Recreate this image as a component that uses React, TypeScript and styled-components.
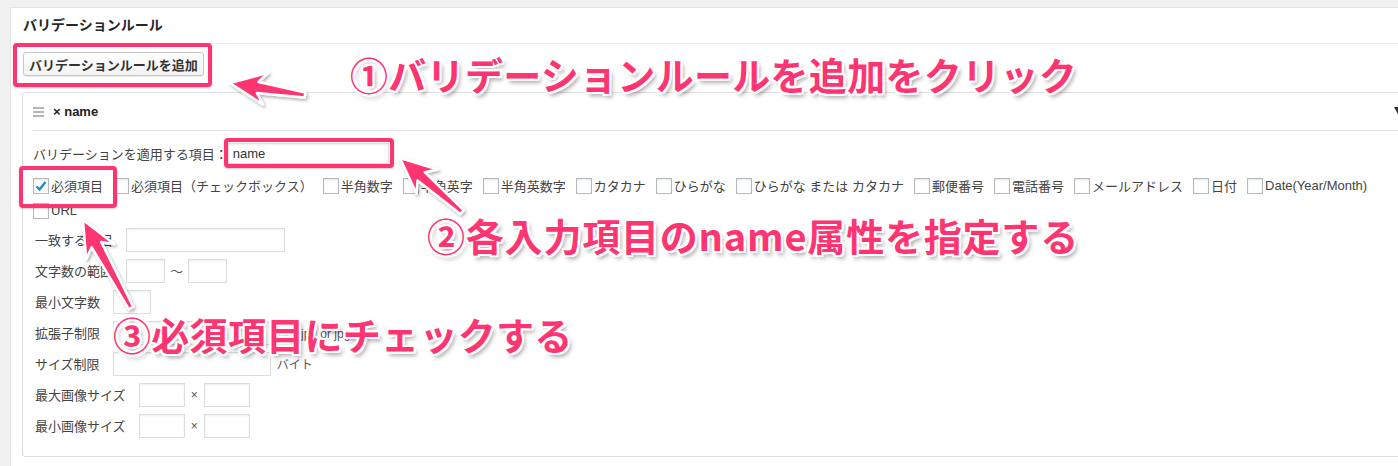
import React from "react";
import styled, { createGlobalStyle } from "styled-components";

const PINK = "#ff3571";

const GlobalStyle = createGlobalStyle`
  html, body {
    margin: 0;
    padding: 0;
  }
  body {
    background: #f1f1f1;
    overflow: hidden;
    font-family: "Liberation Sans", "Noto Sans CJK JP", sans-serif;
    font-size: 13px;
    color: #444;
  }
`;

type Pt = [number, number];

// tip / tail in page coordinates, returns polygon points of a tapered arrow
const arrowPoints = (tip: Pt, tail: Pt, head = 36, wing = 16) => {
  const dx = tip[0] - tail[0];
  const dy = tip[1] - tail[1];
  const len = Math.hypot(dx, dy);
  const ux = dx / len;
  const uy = dy / len;
  const nx = -uy;
  const ny = ux;
  const local: Pt[] = [
    [0, 0],
    [-head, -wing],
    [-head + 8, -5.5],
    [-len, -2.5],
    [-len, 2.5],
    [-head + 8, 5.5],
    [-head, wing]
  ];
  return local
    .map(([a, b]) => `${(tip[0] + a * ux + b * nx).toFixed(1)},${(tip[1] + a * uy + b * ny).toFixed(1)}`)
    .join(" ");
};

const checkItems = [
  { label: "必須項目", checked: true },
  { label: "必須項目（チェックボックス）" },
  { label: "半角数字" },
  { label: "半角英字" },
  { label: "半角英数字" },
  { label: "カタカナ" },
  { label: "ひらがな" },
  { label: "ひらがな または カタカナ" },
  { label: "郵便番号" },
  { label: "電話番号" },
  { label: "メールアドレス" },
  { label: "日付" },
  { label: "Date(Year/Month)" },
  { label: "URL" }
];

const highlights = [
  { x: 13, y: 43, w: 199, h: 44 },
  { x: 224, y: 138, w: 170, h: 30 },
  { x: 19, y: 166, w: 98, h: 42 }
];

const arrows: { tip: Pt; tail: Pt }[] = [
  { tip: [230, 83], tail: [305, 95] },
  { tip: [400, 158], tail: [462, 212] },
  { tip: [83, 220], tail: [131, 308] }
];

const notes = [
  { x: 350, y: 56, text: "①バリデーションルールを追加をクリック", spacing: 0.3 },
  { x: 427, y: 217, text: "②各入力項目のname属性を指定する", spacing: 0.8 },
  { x: 113, y: 316, text: "③必須項目にチェックする", spacing: 0.3 }
];

const App = () => {
  return (
    <Page>
      <GlobalStyle />
      <Panel>
        <PanelTitle>バリデーションルール</PanelTitle>
        <PanelBody>
          <AddButton type="button">バリデーションルールを追加</AddButton>
          <RuleBox>
            <RuleHeader>
              <Handle width="11" height="10" viewBox="0 0 11 10">
                <rect x="0" y="0" width="11" height="2" />
                <rect x="0" y="4" width="11" height="2" />
                <rect x="0" y="8" width="11" height="2" />
              </Handle>
              <span>× name</span>
              <Toggle />
            </RuleHeader>
            <RuleBody>
              <NameRow>
                <span>バリデーションを適用する項目：</span>
                <TextInput $w={161} $h={21} defaultValue="name" readOnly />
              </NameRow>
              <CheckList>
                {checkItems.map((item) => (
                  <CheckItem key={item.label}>
                    <CheckBox>
                      {item.checked && (
                        <svg width="14" height="14" viewBox="0 0 14 14">
                          <path d="M2.5 7.5 L5.5 10.5 L11.5 3" fill="none" stroke="#1e8cbe" strokeWidth="2.4" />
                        </svg>
                      )}
                    </CheckBox>
                    {item.label}
                  </CheckItem>
                ))}
              </CheckList>
              <Options>
                <OptionRow>
                  <OptionLabel>一致する項目</OptionLabel>
                  <TextInput $w={159} readOnly />
                </OptionRow>
                <OptionRow>
                  <OptionLabel>文字数の範囲</OptionLabel>
                  <TextInput $w={39} readOnly />
                  <Sep>～</Sep>
                  <TextInput $w={39} readOnly />
                </OptionRow>
                <OptionRow>
                  <OptionLabel>最小文字数</OptionLabel>
                  <TextInput $w={38} readOnly />
                </OptionRow>
                <OptionRow>
                  <OptionLabel>拡張子制限</OptionLabel>
                  <TextInput $w={158} readOnly />
                  <Note>例：jpg or jpg,txt,…</Note>
                </OptionRow>
                <OptionRow>
                  <OptionLabel>サイズ制限</OptionLabel>
                  <TextInput $w={158} readOnly />
                  <Note>バイト</Note>
                </OptionRow>
                <OptionRow>
                  <OptionLabel>最大画像サイズ</OptionLabel>
                  <TextInput $w={46} readOnly />
                  <Times>×</Times>
                  <TextInput $w={46} readOnly />
                </OptionRow>
                <OptionRow>
                  <OptionLabel>最小画像サイズ</OptionLabel>
                  <TextInput $w={46} readOnly />
                  <Times>×</Times>
                  <TextInput $w={46} readOnly />
                </OptionRow>
              </Options>
            </RuleBody>
          </RuleBox>
        </PanelBody>
      </Panel>

      {highlights.map((h, i) => (
        <Highlight key={i} $x={h.x} $y={h.y} $w={h.w} $h={h.h} />
      ))}

      <ArrowLayer width="1398" height="466" viewBox="0 0 1398 466">
        <defs>
          <filter id="arrowShadow" x="-20%" y="-20%" width="140%" height="140%">
            <feDropShadow dx="1.5" dy="2" stdDeviation="1.5" floodColor="#000" floodOpacity="0.3" />
          </filter>
        </defs>
        {arrows.map((a, i) => (
          <polygon
            key={i}
            points={arrowPoints(a.tip, a.tail)}
            fill={PINK}
            stroke="#fff"
            strokeWidth="2.5"
            strokeLinejoin="round"
            filter="url(#arrowShadow)"
          />
        ))}
      </ArrowLayer>

      {notes.map((n) => (
        <Annotation key={n.text} $x={n.x} $y={n.y} $spacing={n.spacing}>
          {n.text}
        </Annotation>
      ))}
    </Page>
  );
};

const Page = styled.div`
  position: relative;
  width: 1398px;
  height: 466px;
  padding: 7px 0 0 10px;
  box-sizing: border-box;
  overflow: hidden;
`;

const Panel = styled.div`
  width: 1416px;
  min-height: 480px;
  background: #fff;
  border: 1px solid #e5e5e5;
  box-shadow: 0 1px 1px rgba(0, 0, 0, 0.04);
`;

const PanelTitle = styled.div`
  height: 35px;
  line-height: 35px;
  padding: 0 12px;
  border-bottom: 1px solid #eee;
  font-size: 14px;
  font-weight: 700;
  color: #23282d;
`;

const PanelBody = styled.div`
  padding: 8px 12px 0 12px;
`;

const AddButton = styled.button`
  display: block;
  height: 24px;
  padding: 0 5px;
  border: 1px solid #c8c8c8;
  border-radius: 3px;
  background: linear-gradient(#fefefe, #f3f3f3);
  box-shadow: inset 0 1px 0 #fff, 0 1px 0 rgba(0, 0, 0, 0.08);
  font-family: "Liberation Sans", "Noto Sans CJK JP", sans-serif;
  font-size: 13px;
  font-weight: 700;
  color: #333;
`;

const RuleBox = styled.div`
  margin: 16px 0 0 -1px;
  border: 1px solid #dfdfdf;
  border-radius: 3px;
`;

const RuleHeader = styled.div`
  display: flex;
  align-items: center;
  height: 37px;
  margin: 0 10px;
  border-bottom: 1px solid #e1e1e1;
  font-size: 13px;
  font-weight: 700;
  color: #222;
`;

const Handle = styled.svg`
  fill: #b5b5b5;
  margin-right: 9px;
`;

const Toggle = styled.span`
  margin-left: auto;
  width: 0;
  height: 0;
  border-left: 5px solid transparent;
  border-right: 5px solid transparent;
  border-top: 9px solid #333;
`;

const RuleBody = styled.div`
  padding: 12px 10px 18px 10px;
`;

const NameRow = styled.div`
  display: flex;
  align-items: center;
  height: 21px;
`;

const TextInput = styled.input<{ $w: number; $h?: number }>`
  width: ${({ $w }) => $w}px;
  height: ${({ $h }) => $h ?? 24}px;
  box-sizing: border-box;
  margin: 0;
  padding: 0 4px;
  border: 1px solid #ddd;
  background: #fff;
  box-shadow: inset 0 1px 2px rgba(0, 0, 0, 0.07);
  font-family: "Liberation Sans", "Noto Sans CJK JP", sans-serif;
  font-size: 13px;
  color: #333;
  outline: none;
`;

const CheckList = styled.div`
  display: flex;
  flex-wrap: wrap;
  margin-top: 9px;
`;

const CheckItem = styled.label`
  display: inline-flex;
  align-items: center;
  height: 25px;
  margin-right: 10px;
  white-space: nowrap;
  color: #444;
`;

const CheckBox = styled.span`
  display: inline-flex;
  align-items: center;
  justify-content: center;
  width: 16px;
  height: 16px;
  box-sizing: border-box;
  margin-right: 2px;
  border: 1px solid #b4b9be;
  background: #fff;
  box-shadow: inset 0 1px 2px rgba(0, 0, 0, 0.1);
`;

const Options = styled.div`
  display: flex;
  flex-direction: column;
  gap: 6px;
  margin-top: 4px;
`;

const OptionRow = styled.div`
  display: flex;
  align-items: center;
  height: 25px;
`;

const OptionLabel = styled.span`
  padding-left: 2px;
  margin-right: 13px;
`;

const Sep = styled.span`
  margin: 0 5px;
  color: #555;
`;

const Times = styled.span`
  margin: 0 6px;
  font-size: 12px;
  color: #555;
`;

const Note = styled.span`
  margin-left: 6px;
  font-size: 12px;
  color: #555;
`;

const Highlight = styled.div<{ $x: number; $y: number; $w: number; $h: number }>`
  position: absolute;
  left: ${({ $x }) => $x}px;
  top: ${({ $y }) => $y}px;
  width: ${({ $w }) => $w}px;
  height: ${({ $h }) => $h}px;
  box-sizing: border-box;
  border: 4px solid ${PINK};
  border-radius: 4px;
  box-shadow: 0 1px 2px rgba(0, 0, 0, 0.2);
`;

const ArrowLayer = styled.svg`
  position: absolute;
  left: 0;
  top: 0;
  pointer-events: none;
`;

const Annotation = styled.div<{ $x: number; $y: number; $spacing: number }>`
  position: absolute;
  left: ${({ $x }) => $x}px;
  top: ${({ $y }) => $y}px;
  font-family: "Noto Sans CJK JP", sans-serif;
  font-size: 38px;
  line-height: 36px;
  font-weight: 700;
  letter-spacing: ${({ $spacing }) => $spacing}px;
  white-space: nowrap;
  color: ${PINK};
  text-shadow:
    2px 0 0 #fff, -2px 0 0 #fff, 0 2px 0 #fff, 0 -2px 0 #fff,
    2px 2px 0 #fff, -2px -2px 0 #fff, 2px -2px 0 #fff, -2px 2px 0 #fff,
    3px 4px 4px rgba(0, 0, 0, 0.35);
`;

export default App;
